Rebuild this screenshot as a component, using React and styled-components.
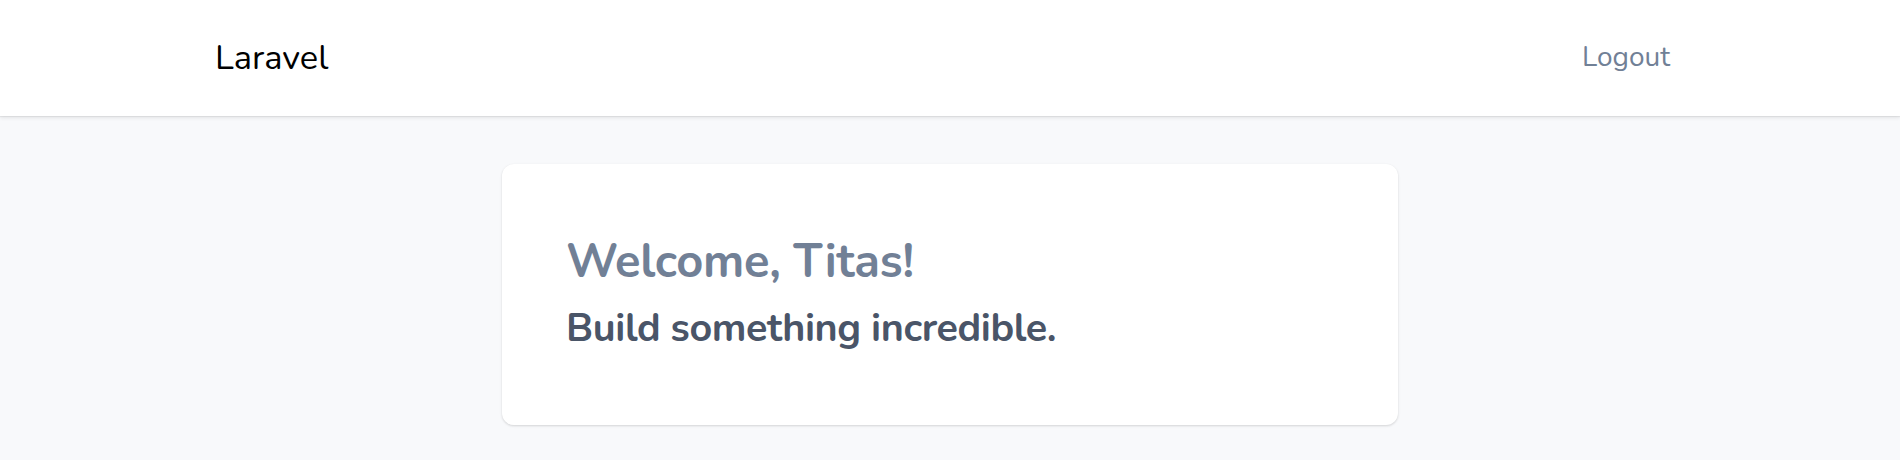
import React from "react";
import styled, { createGlobalStyle } from "styled-components";

const Global = createGlobalStyle`
  html, body { margin: 0; padding: 0; }
  body {
    background: #f8f9fb;
    font-family: "Nunito", "Lato", "Open Sans", sans-serif;
    -webkit-font-smoothing: antialiased;
  }
`;

const Page = styled.div`
  min-height: 460px;
  background: #f8f9fb;
`;

const Nav = styled.nav`
  height: 116px;
  background: #ffffff;
  box-shadow: 0 2px 4px rgba(0, 0, 0, 0.08), 0 1px 1px rgba(0, 0, 0, 0.06);
  display: flex;
  align-items: center;
  position: relative;
`;

const NavInner = styled.div`
  width: 1470px;
  margin: 0 auto;
  display: flex;
  align-items: center;
  justify-content: space-between;
  padding-bottom: 2px;
`;

const Brand = styled.a`
  font-size: 34.5px;
  color: #000000;
  text-decoration: none;
`;

const NavLink = styled.a`
  font-size: 28px;
  color: #718096;
  text-decoration: none;
  padding: 0 15px;
`;

const Main = styled.main`
  display: flex;
  justify-content: center;
  padding-top: 48px;
`;

const Card = styled.div`
  width: 896px;
  height: 261px;
  box-sizing: border-box;
  background: #ffffff;
  border-radius: 12px;
  box-shadow: 0 1px 3px rgba(0, 0, 0, 0.1), 0 1px 2px rgba(0, 0, 0, 0.06);
  padding: 70px 64px;
  display: flex;
  flex-direction: column;
`;

const Heading = styled.h1`
  margin: 0;
  font-size: 47px;
  font-weight: 700;
  letter-spacing: -0.25px;
  line-height: 56px;
  color: #718096;
`;

const Sub = styled.h2`
  margin: 12px 0 0;
  font-size: 39.5px;
  font-weight: 700;
  letter-spacing: -0.4px;
  line-height: 52px;
  color: #4a5568;
`;

export default function App() {
  return (
    <Page>
      <Global />
      <Nav>
        <NavInner>
          <Brand href="#">Laravel</Brand>
          <NavLink href="#">Logout</NavLink>
        </NavInner>
      </Nav>
      <Main>
        <Card>
          <Heading>Welcome, Titas!</Heading>
          <Sub>Build something incredible.</Sub>
        </Card>
      </Main>
    </Page>
  );
}
